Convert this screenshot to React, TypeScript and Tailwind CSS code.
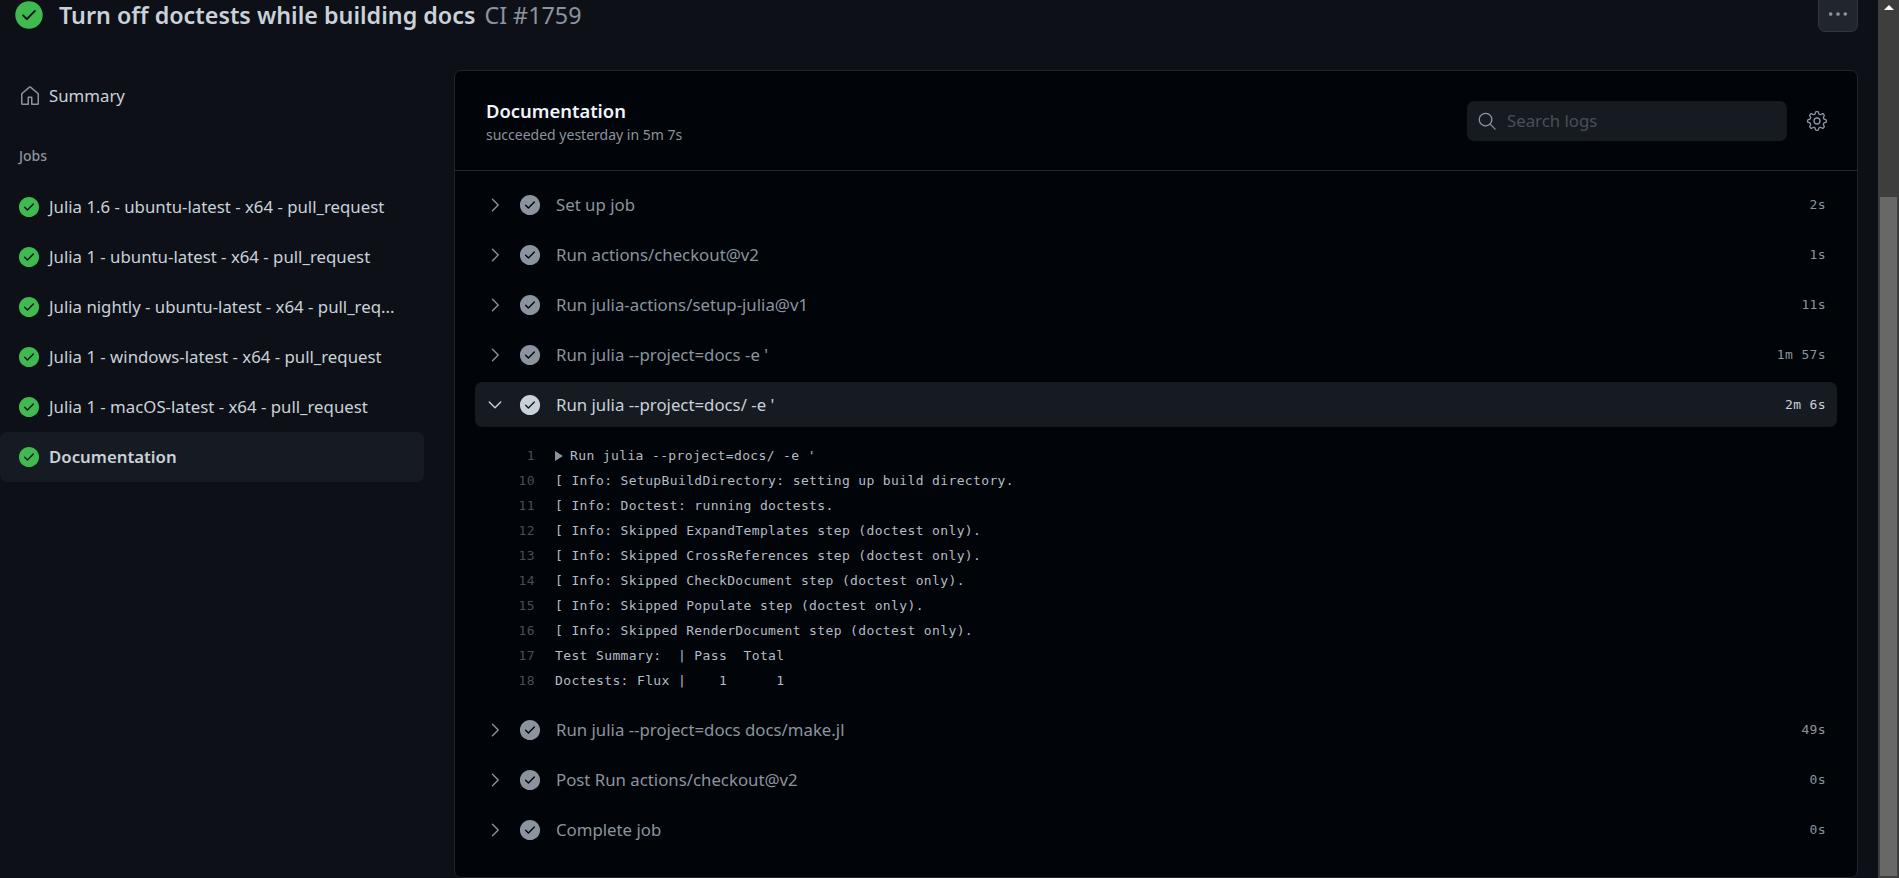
import React from 'react';
import {
  GoCheckCircleFill,
  GoChevronDown,
  GoChevronRight,
  GoGear,
  GoHome,
  GoKebabHorizontal,
  GoSearch,
} from 'react-icons/go';

const jobs = [
  'Julia 1.6 - ubuntu-latest - x64 - pull_request',
  'Julia 1 - ubuntu-latest - x64 - pull_request',
  'Julia nightly - ubuntu-latest - x64 - pull_req...',
  'Julia 1 - windows-latest - x64 - pull_request',
  'Julia 1 - macOS-latest - x64 - pull_request',
];

const stepsBefore = [
  { name: 'Set up job', time: '2s' },
  { name: 'Run actions/checkout@v2', time: '1s' },
  { name: 'Run julia-actions/setup-julia@v1', time: '11s' },
  { name: "Run julia --project=docs -e '", time: '1m 57s' },
];

const stepsAfter = [
  { name: 'Run julia --project=docs docs/make.jl', time: '49s' },
  { name: 'Post Run actions/checkout@v2', time: '0s' },
  { name: 'Complete job', time: '0s' },
];

const logLines = [
  { n: 10, text: '[ Info: SetupBuildDirectory: setting up build directory.' },
  { n: 11, text: '[ Info: Doctest: running doctests.' },
  { n: 12, text: '[ Info: Skipped ExpandTemplates step (doctest only).' },
  { n: 13, text: '[ Info: Skipped CrossReferences step (doctest only).' },
  { n: 14, text: '[ Info: Skipped CheckDocument step (doctest only).' },
  { n: 15, text: '[ Info: Skipped Populate step (doctest only).' },
  { n: 16, text: '[ Info: Skipped RenderDocument step (doctest only).' },
  { n: 17, text: 'Test Summary:  | Pass  Total' },
  { n: 18, text: 'Doctests: Flux |    1      1' },
];

const StepRow: React.FC<{ name: string; time: string; open?: boolean }> = ({ name, time, open }) => (
  <div
    className={`flex items-center h-[45px] rounded-[7px] ${open ? 'bg-[#161b22] text-[#c9d1d9]' : 'text-[#8b949e]'}`}
  >
    <span className="w-[40px] flex justify-center text-[#8b949e]">
      {open ? <GoChevronDown size={22} className="text-[#c9d1d9]" /> : <GoChevronRight size={22} />}
    </span>
    <GoCheckCircleFill size={22} className={`ml-[4px] ${open ? 'text-[#c9d1d9]' : 'text-[#8b949e]'}`} />
    <span className="ml-[15px] text-[16.8px] flex-1">{name}</span>
    <span className="mr-[11px] font-['DejaVu_Sans_Mono',monospace] text-[13px] tracking-[0.37px]">{time}</span>
  </div>
);

const LogLine: React.FC<{ n: number; children: React.ReactNode }> = ({ n, children }) => (
  <div className="flex h-[25px] items-center font-['DejaVu_Sans_Mono',monospace] text-[13px] tracking-[0.37px] text-[#b4bcc6] whitespace-pre">
    <span className="w-[60px] text-right text-[#484f58]">{n}</span>
    <span className="ml-[20px] flex items-center">{children}</span>
  </div>
);

export default function App() {
  return (
    <div className="flex h-[878px] w-full overflow-hidden bg-[#0d1117] font-['Noto_Sans',sans-serif]">
      <div className="flex-1 min-w-0 pr-[20px]">
        <div className="flex items-center h-[30px]">
          <GoCheckCircleFill size={30} className="ml-[14px] text-[#3fb950]" />
          <h1 className="ml-[15px] mt-[1px] text-[23.3px] font-semibold text-[#c9d1d9]">
            Turn off doctests while building docs
          </h1>
          <span className="ml-[9px] mt-[1px] text-[23.3px] text-[#8b949e]">CI #1759</span>
          <button className="ml-auto -mt-[8px] flex h-[42px] w-[40px] items-center justify-center rounded-[7px] border border-[#30363d] bg-[#21262d] pt-[5px] text-[#8b949e]">
            <GoKebabHorizontal size={22} />
          </button>
        </div>

        <div className="flex mt-[40px]">
          <aside className="w-[454px] shrink-0 pr-[30px]">
            <div className="flex items-center h-[50px] pl-[18px] mt-[1px] text-[16.8px] text-[#c9d1d9]">
              <GoHome size={24} className="text-[#8b949e]" />
              <span className="ml-[7px]">Summary</span>
            </div>
            <div className="flex items-center h-[20px] mt-[24px] mb-[17px] pl-[19px] text-[14px] font-medium text-[#8b949e]">
              Jobs
            </div>
            {jobs.map(job => (
              <div key={job} className="flex items-center h-[50px] pl-[18px] text-[16.8px] text-[#c9d1d9]">
                <GoCheckCircleFill size={22} className="text-[#3fb950] shrink-0" />
                <span className="ml-[9px] whitespace-nowrap">{job}</span>
              </div>
            ))}
            <div className="flex items-center h-[50px] pl-[18px] rounded-[7px] bg-[#161b22] text-[16.8px] font-semibold text-[#c9d1d9]">
              <GoCheckCircleFill size={22} className="text-[#3fb950] shrink-0" />
              <span className="ml-[9px]">Documentation</span>
            </div>
          </aside>

          <section className="flex-1 min-w-0 h-[808px] rounded-[7px] border border-[#21262d] bg-[#010409]">
            <header className="flex items-center h-[100px] border-b border-[#21262d] pl-[31px] pr-[29px]">
              <div className="flex-1 pt-[2px]">
                <h2 className="text-[18.4px] leading-[24px] font-semibold text-[#f0f6fc]">Documentation</h2>
                <p className="text-[14px] leading-[20px] mt-[2px] text-[#8b949e]">succeeded yesterday in 5m 7s</p>
              </div>
              <div className="flex items-center h-[40px] w-[320px] rounded-[7px] bg-[#161b22] pl-[10px]">
                <GoSearch size={20} className="text-[#8b949e]" />
                <span className="ml-[10px] mt-[1px] text-[16.8px] text-[#484f58]">Search logs</span>
              </div>
              <GoGear size={22} className="ml-[19px] text-[#8b949e]" />
            </header>

            <div className="flex flex-col gap-[5px] px-[20px] pt-[11px]">
              {stepsBefore.map(s => (
                <StepRow key={s.name} name={s.name} time={s.time} />
              ))}
              <StepRow name="Run julia --project=docs/ -e '" time="2m 6s" open />
            </div>

            <div className="px-[20px] pt-[16px] pb-[14px]">
              <LogLine n={1}>
                <span className="mr-[7px] h-0 w-0 border-y-[5px] border-l-[8px] border-y-transparent border-l-[#8b949e]" />
                Run julia --project=docs/ -e '
              </LogLine>
              {logLines.map(l => (
                <LogLine key={l.n} n={l.n}>
                  {l.text}
                </LogLine>
              ))}
            </div>

            <div className="flex flex-col gap-[5px] px-[20px]">
              {stepsAfter.map(s => (
                <StepRow key={s.name} name={s.name} time={s.time} />
              ))}
            </div>
          </section>
        </div>
      </div>

      <div className="w-[21px] shrink-0 bg-[#3e3e3e] flex flex-col items-center">
        <div className="mt-[5px] h-0 w-0 border-x-[5px] border-b-[5px] border-x-transparent border-b-white" />
        <div className="mt-[187px] h-[679px] w-[17px] bg-[#686868]" />
      </div>
    </div>
  );
}
